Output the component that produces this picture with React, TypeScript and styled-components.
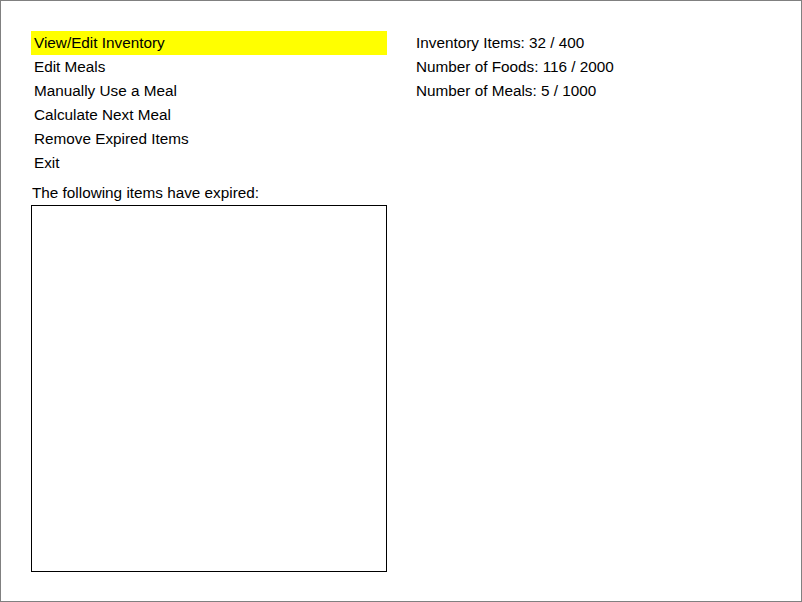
import styled, { createGlobalStyle } from 'styled-components';

const GlobalStyle = createGlobalStyle`
  html, body {
    margin: 0;
    padding: 0;
    background: #ffffff;
  }
  body {
    font-family: "Liberation Sans", Arial, sans-serif;
    color: #000000;
  }
`;

const Frame = styled.div`
  box-sizing: border-box;
  width: 802px;
  height: 602px;
  border: 1px solid #808080;
  padding: 30px 0 0 30px;
  display: flex;
  align-items: flex-start;
  gap: 29px;
  font-size: 15.3px;
  line-height: 24px;
`;

const LeftColumn = styled.div`
  display: flex;
  flex-direction: column;
  width: 356px;
`;

const Menu = styled.div`
  display: flex;
  flex-direction: column;
`;

const MenuItem = styled.div<{ $selected?: boolean }>`
  height: 24px;
  padding-left: 3px;
  white-space: nowrap;
  background: ${props => (props.$selected ? '#ffff00' : 'transparent')};
`;

const Label = styled.div`
  margin-top: 6px;
  padding-left: 1px;
  height: 24px;
`;

const ExpiredBox = styled.div`
  box-sizing: border-box;
  width: 356px;
  height: 367px;
  border: 1px solid #000000;
  background: #ffffff;
`;

const Stats = styled.div`
  display: flex;
  flex-direction: column;
`;

const StatLine = styled.div`
  height: 24px;
  white-space: nowrap;
`;

const menuItems = [
  'View/Edit Inventory',
  'Edit Meals',
  'Manually Use a Meal',
  'Calculate Next Meal',
  'Remove Expired Items',
  'Exit',
];

const stats = [
  'Inventory Items: 32 / 400',
  'Number of Foods: 116 / 2000',
  'Number of Meals: 5 / 1000',
];

export default function App() {
  return (
    <>
      <GlobalStyle />
      <Frame>
        <LeftColumn>
          <Menu>
            {menuItems.map((item, i) => (
              <MenuItem key={item} $selected={i === 0}>
                {item}
              </MenuItem>
            ))}
          </Menu>
          <Label>The following items have expired:</Label>
          <ExpiredBox />
        </LeftColumn>
        <Stats>
          {stats.map(s => (
            <StatLine key={s}>{s}</StatLine>
          ))}
        </Stats>
      </Frame>
    </>
  );
}
